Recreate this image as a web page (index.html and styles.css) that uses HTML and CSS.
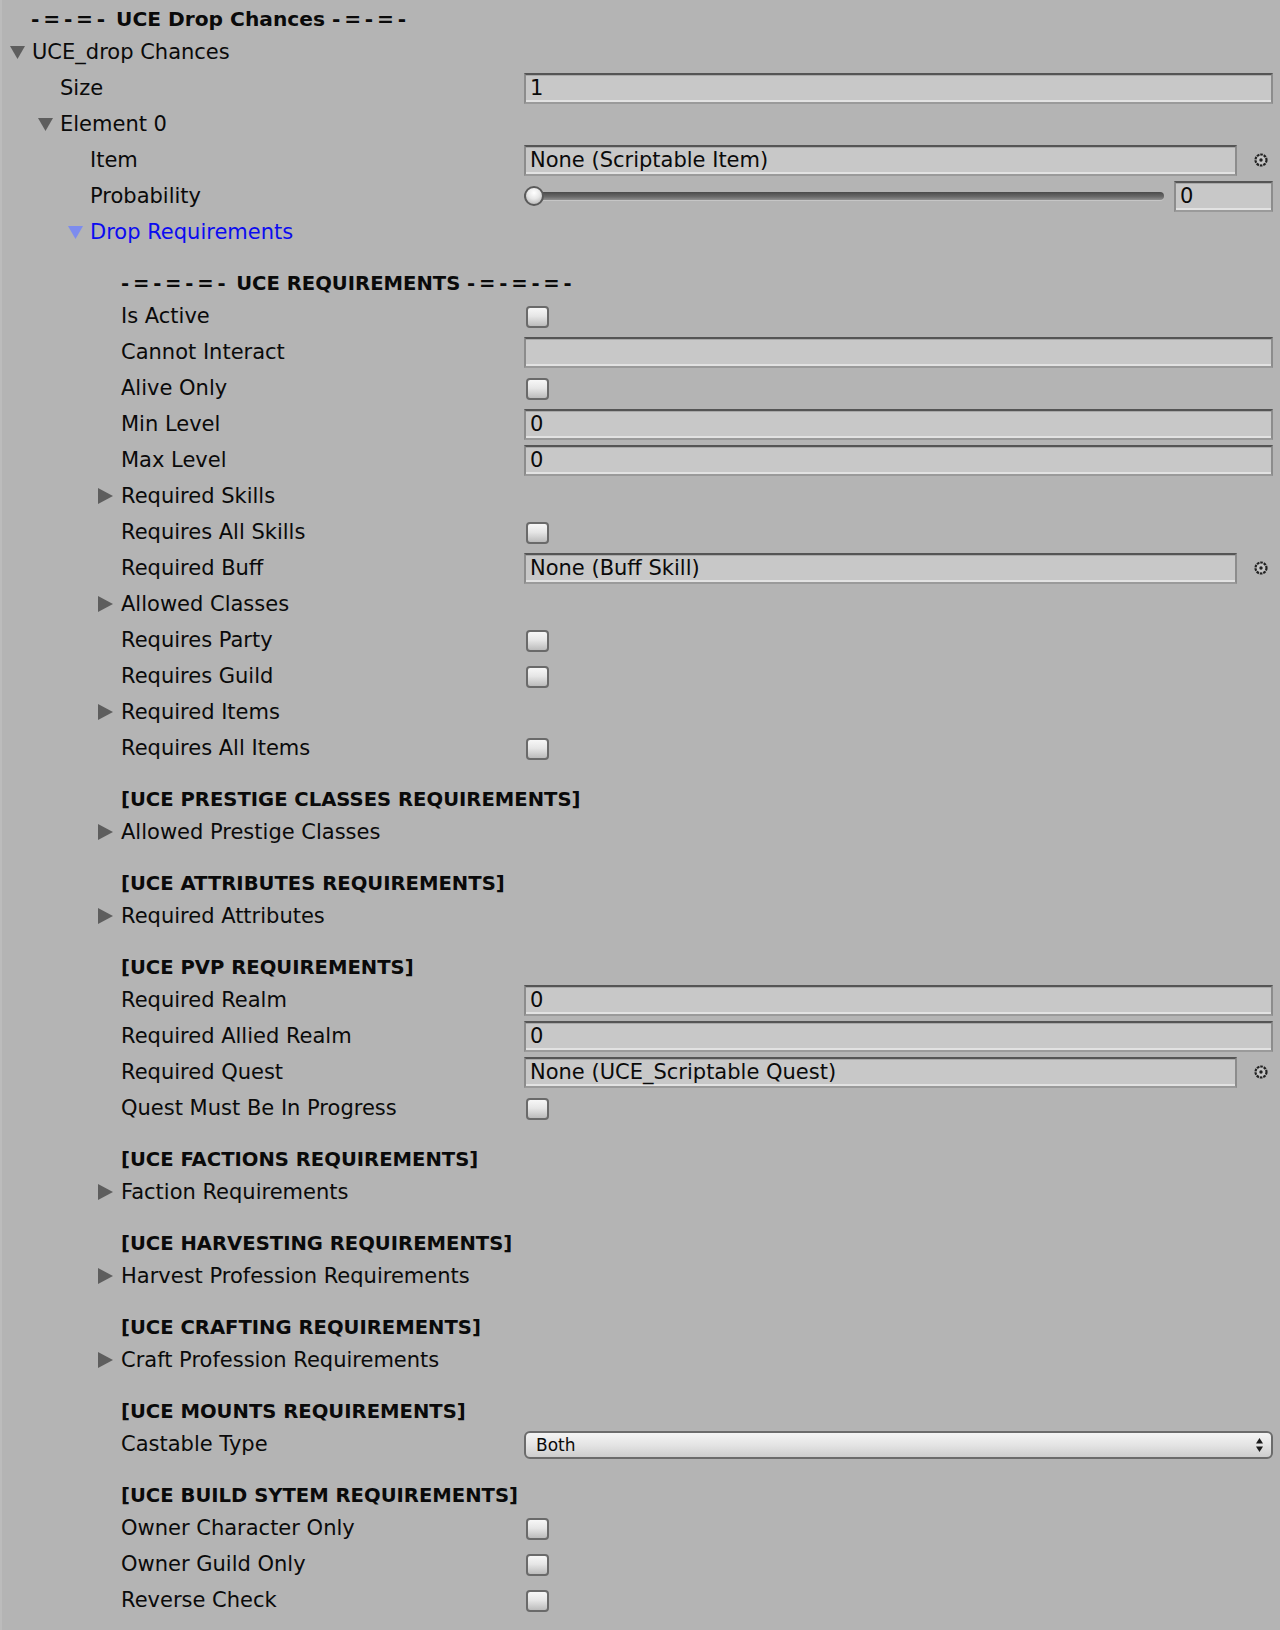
FILE: index.html
```html
<!DOCTYPE html>
<html>
<head>
<meta charset="utf-8">
<link rel="stylesheet" href="styles.css">
</head>
<body>
<div class="inspector">
  <div class="title"><span class="dashes">-=-=-</span> UCE Drop Chances <span class="dashes">-=-=-</span></div>

  <div class="row"><div class="name l0"><svg class="tri" width="15" height="13" viewBox="0 0 15 13"><polygon points="0,0 15,0 7.5,13"/></svg>UCE_drop Chances</div></div>
  <div class="row"><div class="name l1">Size</div><div class="field">1</div></div>
  <div class="row"><div class="name l1"><svg class="tri" width="15" height="13" viewBox="0 0 15 13"><polygon points="0,0 15,0 7.5,13"/></svg>Element 0</div></div>
  <div class="row"><div class="name l2">Item</div><div class="field">None (Scriptable Item)</div><div class="picker"><svg width="16" height="16" viewBox="0 0 16 16"><circle cx="8" cy="8" r="5.5" fill="#c4c4c4" stroke="#222" stroke-width="2.2" stroke-dasharray="2.6 0.9"/><circle cx="8" cy="8" r="1.7" fill="#222"/></svg></div></div>
  <div class="row"><div class="name l2">Probability</div><div class="slider"><div class="track"></div><div class="thumb"></div></div><div class="field num">0</div></div>
  <div class="row"><div class="name l2 blue"><svg class="tri" width="15" height="13" viewBox="0 0 15 13"><polygon points="0,0 15,0 7.5,13"/></svg>Drop Requirements</div></div>

  <div class="header"><span class="dashes">-=-=-=-</span> UCE REQUIREMENTS <span class="dashes">-=-=-=-</span></div>
  <div class="row"><div class="name l3">Is Active</div><div class="check"></div></div>
  <div class="row"><div class="name l3">Cannot Interact</div><div class="field"></div></div>
  <div class="row"><div class="name l3">Alive Only</div><div class="check"></div></div>
  <div class="row"><div class="name l3">Min Level</div><div class="field">0</div></div>
  <div class="row"><div class="name l3">Max Level</div><div class="field">0</div></div>
  <div class="row"><div class="name l3"><svg class="tri r" width="15" height="16" viewBox="0 0 15 16"><polygon points="0,0 15,8 0,16"/></svg>Required Skills</div></div>
  <div class="row"><div class="name l3">Requires All Skills</div><div class="check"></div></div>
  <div class="row"><div class="name l3">Required Buff</div><div class="field">None (Buff Skill)</div><div class="picker"><svg width="16" height="16" viewBox="0 0 16 16"><circle cx="8" cy="8" r="5.5" fill="#c4c4c4" stroke="#222" stroke-width="2.2" stroke-dasharray="2.6 0.9"/><circle cx="8" cy="8" r="1.7" fill="#222"/></svg></div></div>
  <div class="row"><div class="name l3"><svg class="tri r" width="15" height="16" viewBox="0 0 15 16"><polygon points="0,0 15,8 0,16"/></svg>Allowed Classes</div></div>
  <div class="row"><div class="name l3">Requires Party</div><div class="check"></div></div>
  <div class="row"><div class="name l3">Requires Guild</div><div class="check"></div></div>
  <div class="row"><div class="name l3"><svg class="tri r" width="15" height="16" viewBox="0 0 15 16"><polygon points="0,0 15,8 0,16"/></svg>Required Items</div></div>
  <div class="row"><div class="name l3">Requires All Items</div><div class="check"></div></div>

  <div class="header">[UCE PRESTIGE CLASSES REQUIREMENTS]</div>
  <div class="row"><div class="name l3"><svg class="tri r" width="15" height="16" viewBox="0 0 15 16"><polygon points="0,0 15,8 0,16"/></svg>Allowed Prestige Classes</div></div>

  <div class="header">[UCE ATTRIBUTES REQUIREMENTS]</div>
  <div class="row"><div class="name l3"><svg class="tri r" width="15" height="16" viewBox="0 0 15 16"><polygon points="0,0 15,8 0,16"/></svg>Required Attributes</div></div>

  <div class="header">[UCE PVP REQUIREMENTS]</div>
  <div class="row"><div class="name l3">Required Realm</div><div class="field">0</div></div>
  <div class="row"><div class="name l3">Required Allied Realm</div><div class="field">0</div></div>
  <div class="row"><div class="name l3">Required Quest</div><div class="field">None (UCE_Scriptable Quest)</div><div class="picker"><svg width="16" height="16" viewBox="0 0 16 16"><circle cx="8" cy="8" r="5.5" fill="#c4c4c4" stroke="#222" stroke-width="2.2" stroke-dasharray="2.6 0.9"/><circle cx="8" cy="8" r="1.7" fill="#222"/></svg></div></div>
  <div class="row"><div class="name l3">Quest Must Be In Progress</div><div class="check"></div></div>

  <div class="header">[UCE FACTIONS REQUIREMENTS]</div>
  <div class="row"><div class="name l3"><svg class="tri r" width="15" height="16" viewBox="0 0 15 16"><polygon points="0,0 15,8 0,16"/></svg>Faction Requirements</div></div>

  <div class="header">[UCE HARVESTING REQUIREMENTS]</div>
  <div class="row"><div class="name l3"><svg class="tri r" width="15" height="16" viewBox="0 0 15 16"><polygon points="0,0 15,8 0,16"/></svg>Harvest Profession Requirements</div></div>

  <div class="header">[UCE CRAFTING REQUIREMENTS]</div>
  <div class="row"><div class="name l3"><svg class="tri r" width="15" height="16" viewBox="0 0 15 16"><polygon points="0,0 15,8 0,16"/></svg>Craft Profession Requirements</div></div>

  <div class="header">[UCE MOUNTS REQUIREMENTS]</div>
  <div class="row"><div class="name l3">Castable Type</div><div class="popup"><span>Both</span><svg width="9" height="16" viewBox="0 0 9 16"><polygon points="4.5,1 8,6.5 1,6.5" fill="#1a1a1a"/><polygon points="1,9.5 8,9.5 4.5,15" fill="#1a1a1a"/></svg></div></div>

  <div class="header">[UCE BUILD SYTEM REQUIREMENTS]</div>
  <div class="row"><div class="name l3">Owner Character Only</div><div class="check"></div></div>
  <div class="row"><div class="name l3">Owner Guild Only</div><div class="check"></div></div>
  <div class="row"><div class="name l3">Reverse Check</div><div class="check"></div></div>
</div>
</body>
</html>
```

FILE: styles.css
```css
html, body {
  margin: 0;
  padding: 0;
  background: #b4b4b4;
}
body {
  font-family: "DejaVu Sans", "Liberation Sans", sans-serif;
  font-size: 21px;
  color: #0a0a0a;
}
.inspector {
  border-left: 2px solid #bcbcbc;
  padding-right: 7px;
  min-height: 1630px;
  box-sizing: border-box;
}
.title {
  height: 34px;
  line-height: 38px;
  padding-left: 29px;
  font-weight: bold;
  font-size: 20.2px;
  white-space: nowrap;
}
.dashes {
  letter-spacing: 3.8px;
}
.row {
  height: 36px;
  display: flex;
  align-items: center;
}
.name {
  width: 522px;
  flex: none;
  box-sizing: border-box;
  display: flex;
  align-items: center;
  white-space: nowrap;
  line-height: 36px;
}
.l0 { padding-left: 30px; }
.l1 { padding-left: 58px; }
.l2 { padding-left: 88px; }
.l3 { padding-left: 119px; }
.tri {
  flex: none;
  margin-left: -22px;
  margin-right: 7px;
  fill: #5e5e5e;
}
.tri.r {
  margin-left: -23px;
  margin-right: 8px;
}
.blue { color: #0b0bf0; }
.blue .tri { fill: #7d8cee; }

.header {
  margin-top: 16px;
  height: 32px;
  line-height: 36px;
  padding-left: 119px;
  font-weight: bold;
  font-size: 19.6px;
  white-space: nowrap;
}

.field {
  flex: 1;
  height: 31px;
  margin-top: 1px;
  box-sizing: border-box;
  background: #c8c8c8;
  border-style: solid;
  border-width: 2px 2px 2px 2px;
  border-color: #555555 #8c8c8c #9a9a9a #8c8c8c;
  box-shadow: inset 0 1px 0 #a9a9a9, inset 0 -2px 0 #e2e2e2;
  padding-left: 4px;
  line-height: 26px;
  white-space: nowrap;
  overflow: hidden;
}
.field.num {
  flex: none;
  width: 99px;
  margin-left: 10px;
}
.picker {
  width: 36px;
  flex: none;
  display: flex;
  justify-content: flex-start;
  align-items: center;
  padding-left: 16px;
  box-sizing: border-box;
}
.picker svg { display: block; }

.slider {
  flex: 1;
  position: relative;
  height: 31px;
}
.track {
  position: absolute;
  left: 0;
  right: 0;
  top: 11px;
  height: 8px;
  border-radius: 4px;
  background: linear-gradient(#4a4a4a, #6a6a6a 60%, #8f8f8f);
  box-shadow: 0 1px 0 #c6c6c6;
}
.thumb {
  position: absolute;
  left: 0;
  top: 5px;
  width: 20px;
  height: 20px;
  box-sizing: border-box;
  border-radius: 50%;
  border: 2px solid #5a5a5a;
  background: radial-gradient(circle at 50% 30%, #ffffff, #e6e6e6 45%, #a9a9a9);
}

.check {
  width: 23px;
  height: 22px;
  margin-left: 2px;
  margin-top: 1px;
  box-sizing: border-box;
  border: 2px solid #6a6a6a;
  border-radius: 4px;
  background: linear-gradient(#f7f7f7, #e6e6e6 45%, #bcbcbc);
}

.popup {
  flex: 1;
  height: 28px;
  margin-top: 1px;
  box-sizing: border-box;
  border: 2px solid #6b6b6b;
  border-radius: 6px;
  background: linear-gradient(#f4f4f4, #e4e4e4 50%, #cdcdcd);
  display: flex;
  align-items: center;
  justify-content: space-between;
  padding: 0 7px 0 10px;
  font-size: 17px;
}
.popup svg { display: block; }
```
